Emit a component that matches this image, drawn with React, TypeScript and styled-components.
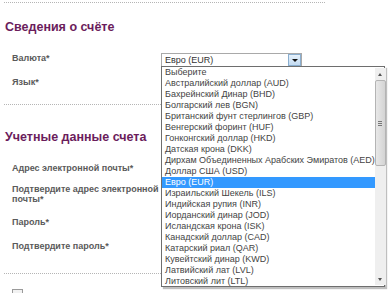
import styled, { createGlobalStyle } from 'styled-components'

const CURRENCIES = [
  'Выберите',
  'Австралийский доллар (AUD)',
  'Бахрейнский Динар (BHD)',
  'Болгарский лев (BGN)',
  'Британский фунт стерлингов (GBP)',
  'Венгерский форинт (HUF)',
  'Гонконгский доллар (HKD)',
  'Датская крона (DKK)',
  'Дирхам Объединенных Арабских Эмиратов (AED)',
  'Доллар США (USD)',
  'Евро (EUR)',
  'Израильский Шекель (ILS)',
  'Индийская рупия (INR)',
  'Иорданский динар (JOD)',
  'Исландская крона (ISK)',
  'Канадский доллар (CAD)',
  'Катарский риал (QAR)',
  'Кувейтский динар (KWD)',
  'Латвийский лат (LVL)',
  'Литовский лит (LTL)',
]

const SELECTED = 'Евро (EUR)'

const GlobalStyle = createGlobalStyle`
  html, body {
    margin: 0;
    padding: 0;
    background: #ffffff;
    overflow: hidden;
  }
  body {
    font-family: "Liberation Sans", Arial, sans-serif;
  }
`

const Page = styled.div`
  width: 389px;
  height: 293px;
  padding: 0 0 0 4px;
  box-sizing: border-box;
  overflow: hidden;
`

const Divider = styled.div<{ $top: number; $bottom: number }>`
  width: 321px;
  margin-top: ${p => p.$top}px;
  margin-bottom: ${p => p.$bottom}px;
  border-top: 1px dotted #b5b5b5;
`

const Heading = styled.h2<{ $bottom: number }>`
  margin: 0 0 ${p => p.$bottom}px 1px;
  font-size: 12.5px;
  line-height: 15px;
  font-weight: bold;
  color: #6b1d5c;
`

const Row = styled.div<{ $height: number }>`
  display: flex;
  align-items: flex-start;
  height: ${p => p.$height}px;
`

const Label = styled.div`
  width: 149px;
  padding-left: 8px;
  font-size: 9px;
  line-height: 9.5px;
  font-weight: bold;
  color: #5a5a5a;
`

const SelectWrap = styled.div`
  position: relative;
  margin-top: -1px;
`

const SelectBox = styled.div`
  display: flex;
  align-items: center;
  justify-content: space-between;
  width: 141px;
  height: 14px;
  box-sizing: border-box;
  border: 1px solid #a9a9a9;
  background: #fff;
  padding-left: 3px;
  font-size: 9px;
  color: #333;
`

const ArrowButton = styled.div`
  display: flex;
  align-items: center;
  justify-content: center;
  width: 13px;
  height: 12px;
  box-sizing: border-box;
  border: 1px solid #8aaecf;
  background: linear-gradient(#e6f1fb, #c3dbf2);
`

const Triangle = styled.div`
  width: 0;
  height: 0;
  border-left: 3px solid transparent;
  border-right: 3px solid transparent;
  border-top: 3px solid #111;
`

const List = styled.div`
  position: absolute;
  left: 0;
  top: 13px;
  width: 224px;
  height: 221px;
  box-sizing: border-box;
  border: 1px solid #6e6e6e;
  background: #fff;
  box-shadow: 2px 2px 1px rgba(0, 0, 0, 0.25);
  display: flex;
`

const Options = styled.div`
  flex: 1;
  display: flex;
  flex-direction: column;
`

const Option = styled.div<{ $active: boolean }>`
  height: 11px;
  line-height: 11px;
  padding-left: 3px;
  font-size: 9px;
  white-space: nowrap;
  color: ${p => (p.$active ? '#ffffff' : '#444444')};
  background: ${p => (p.$active ? '#3399ff' : 'transparent')};
`

const Scrollbar = styled.div`
  width: 11px;
  margin: 1px 1px 1px 0;
  background: #efefef;
  display: flex;
  flex-direction: column;
  align-items: center;
`

const ScrollArrow = styled.div<{ $up: boolean }>`
  height: 12px;
  display: flex;
  align-items: center;
  justify-content: center;
  &::after {
    content: '';
    border-left: 2.5px solid transparent;
    border-right: 2.5px solid transparent;
    ${p => (p.$up ? 'border-bottom: 3px solid #555;' : 'border-top: 3px solid #555;')}
  }
`

const Thumb = styled.div`
  width: 11px;
  height: 86px;
  box-sizing: border-box;
  border: 1px solid #b4b4b4;
  border-radius: 2px;
  background: linear-gradient(90deg, #e8e8e8, #d4d4d4);
  display: flex;
  align-items: center;
  justify-content: center;
`

const Grip = styled.div`
  width: 4px;
  height: 5px;
  background: repeating-linear-gradient(#777 0 1px, transparent 1px 2px);
`

const Track = styled.div`
  flex: 1;
`

const Checkbox = styled.div`
  width: 9px;
  height: 9px;
  margin-left: 8px;
  border: 1px solid #9a9a9a;
  background: #f2f2f2;
`

export default function App() {
  return (
    <>
      <GlobalStyle />
      <Page>
        <Divider $top={2} $bottom={17} />
        <Heading $bottom={19}>Сведения о счёте</Heading>
        <Row $height={24}>
          <Label>Валюта*</Label>
          <SelectWrap>
            <SelectBox>
              {SELECTED}
              <ArrowButton>
                <Triangle />
              </ArrowButton>
            </SelectBox>
            <List>
              <Options>
                {CURRENCIES.map(c => (
                  <Option key={c} $active={c === SELECTED}>
                    {c}
                  </Option>
                ))}
              </Options>
              <Scrollbar>
                <ScrollArrow $up />
                <Thumb>
                  <Grip />
                </Thumb>
                <Track />
                <ScrollArrow $up={false} />
              </Scrollbar>
            </List>
          </SelectWrap>
        </Row>
        <Row $height={26}>
          <Label>Язык*</Label>
        </Row>
        <Divider $top={0} $bottom={25} />
        <Heading $bottom={19}>Учетные данные счета</Heading>
        <Row $height={21}>
          <Label>Адрес электронной почты*</Label>
        </Row>
        <Row $height={33}>
          <Label>Подтвердите адрес электронной почты*</Label>
        </Row>
        <Row $height={24}>
          <Label>Пароль*</Label>
        </Row>
        <Row $height={31}>
          <Label>Подтвердите пароль*</Label>
        </Row>
        <Divider $top={0} $bottom={15} />
        <Checkbox />
      </Page>
    </>
  )
}
